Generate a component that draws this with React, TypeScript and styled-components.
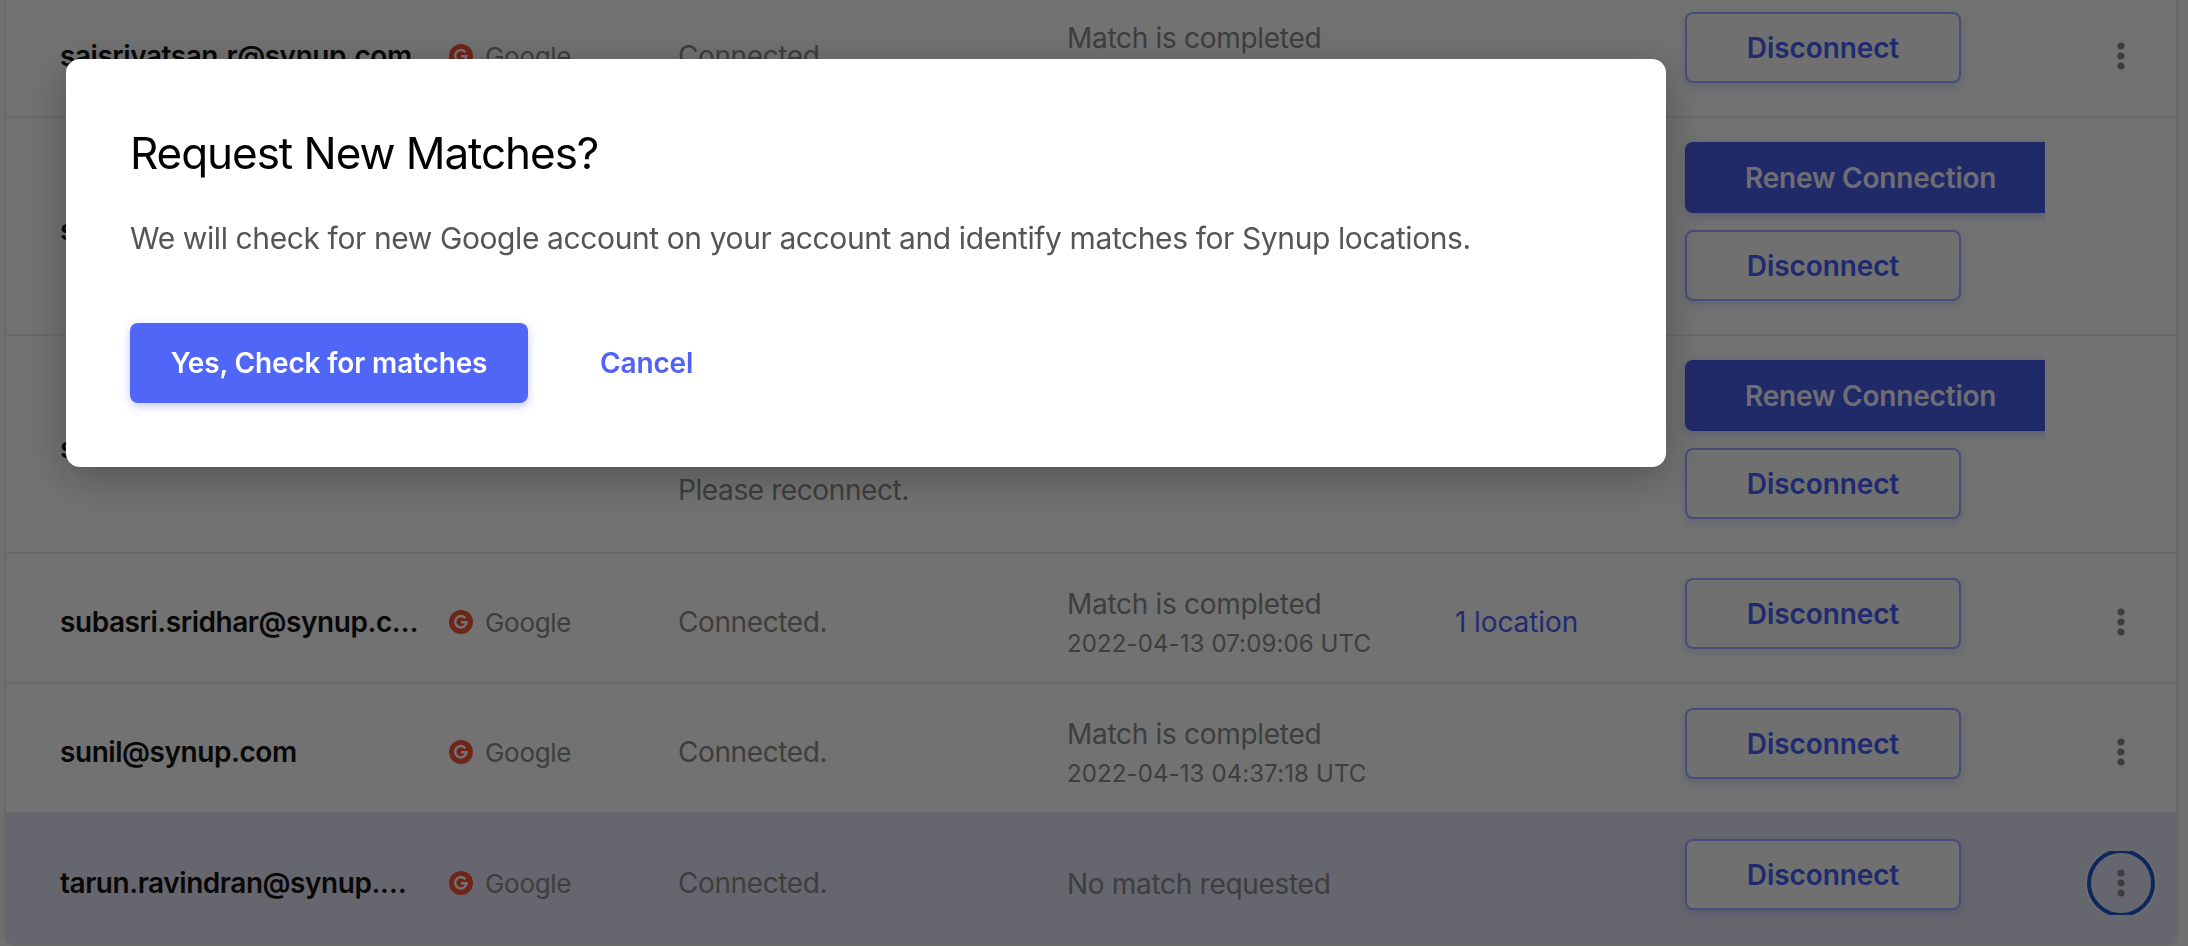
import React from "react";
import styled, { createGlobalStyle } from "styled-components";

const Global = createGlobalStyle`
  html, body { margin: 0; padding: 0; height: 100%; overflow: hidden; background: #e0e0e0; }
  body { font-family: Inter, "Liberation Sans", sans-serif; -webkit-font-smoothing: antialiased; }
  * { box-sizing: border-box; }
`;

const Page = styled.div`
  height: 946px;
  overflow: hidden;
  padding: 0 10px 0 4px;
`;

const Card = styled.section`
  margin-top: -12px;
  border: solid #d2d2d2;
  border-width: 0 2px 2px 2px;
  border-radius: 0 0 10px 10px;
  background: #e4e4e4;
`;

const Row = styled.div<{ $tall?: boolean; $active?: boolean }>`
  display: grid;
  grid-template-columns: 389px 229px 389px 388px 230px 400px 72px;
  align-items: center;
  height: ${(p) => (p.$tall ? 218 : 130)}px;
  padding: 8px 0 0 54px;
  border-bottom: 2px solid ${(p) => (p.$active ? "transparent" : "#d2d2d2")};
  background: ${(p) => (p.$active ? "#ccccde" : "transparent")};
  &:last-child {
    border-bottom: 0;
    border-radius: 0 0 8px 8px;
  }
`;

const Email = styled.div`
  width: 359px;
  font-size: 28px;
  font-weight: 600;
  letter-spacing: -0.45px;
  color: #111;
  white-space: nowrap;
  overflow: hidden;
  text-overflow: ellipsis;
`;

const Provider = styled.div`
  display: flex;
  align-items: center;
  gap: 12px;
  font-size: 26px;
  letter-spacing: -0.3px;
  color: #7c7c7c;
`;

const Status = styled.div<{ $drop?: number }>`
  padding-top: ${(p) => p.$drop ?? 0}px;
  font-size: 28px;
  letter-spacing: -0.4px;
  color: #7c7c7c;
`;

const MatchCell = styled.div`
  display: flex;
  flex-direction: column;
  gap: 8px;
  padding-top: 2px;
`;

const MatchTitle = styled.span`
  font-size: 28px;
  line-height: 34px;
  letter-spacing: -0.3px;
  color: #7c7c7c;
`;

const MatchDate = styled.span`
  font-size: 24px;
  line-height: 30px;
  letter-spacing: 0.12px;
  color: #7c7c7c;
`;

const LocationLink = styled.a`
  font-size: 28px;
  letter-spacing: -0.1px;
  color: #4358e0;
`;

const Actions = styled.div`
  display: flex;
  flex-direction: column;
  gap: 17px;
  padding-bottom: 17px;
`;

const Disconnect = styled.button`
  width: 276px;
  height: 71px;
  border: 2px solid #8c9cf0;
  border-radius: 8px;
  background: #e0e0e0;
  box-shadow: 0 3px 8px rgba(70, 90, 220, 0.22);
  color: #4055de;
  font: 600 28px Inter, sans-serif;
  letter-spacing: -0.1px;
`;

const RenewClip = styled.div`
  width: 360px;
  clip-path: inset(-14px 0 -14px -14px);
`;

const Renew = styled.button`
  width: 420px;
  height: 71px;
  padding: 0 0 0 60px;
  border: 0;
  border-radius: 8px;
  text-align: left;
  background: #4355d2;
  box-shadow: 0 3px 10px rgba(70, 90, 220, 0.3);
  color: #dcdce8;
  font: 600 28px Inter, sans-serif;
  letter-spacing: -0.2px;
`;

const KebabClip = styled.div`
  display: flex;
  align-items: center;
  justify-content: center;
  width: 72px;
  height: 64px;
  overflow: hidden;
`;

const Kebab = styled.button<{ $focused?: boolean }>`
  flex: none;
  display: flex;
  align-items: center;
  justify-content: center;
  width: 68px;
  height: 68px;
  padding: 0;
  border-radius: 50%;
  background: transparent;
  border: 4px solid ${(p) => (p.$focused ? "#1c50b8" : "transparent")};
  box-shadow: ${(p) => (p.$focused ? "0 0 0 2px rgba(255,255,255,.25)" : "none")};
`;

const Overlay = styled.div`
  position: fixed;
  inset: 0;
  padding: 59px 522px 0 66px;
  background: rgba(0, 0, 0, 0.5);
`;

const Modal = styled.div`
  width: 1600px;
  height: 408px;
  padding: 64px 64px 0;
  border-radius: 14px;
  background: #fff;
  box-shadow: 0 10px 40px rgba(0, 0, 0, 0.28);
`;

const Title = styled.h2`
  margin: 0;
  font-size: 44px;
  line-height: 60px;
  font-weight: 400;
  letter-spacing: -1.05px;
  color: #000;
`;

const Body = styled.p`
  margin: 35px 0 0;
  font-size: 30px;
  line-height: 40px;
  letter-spacing: -0.4px;
  color: #555;
`;

const ModalActions = styled.div`
  display: flex;
  align-items: center;
  gap: 72px;
  margin-top: 65px;
`;

const Primary = styled.button`
  width: 398px;
  height: 80px;
  border: 0;
  border-radius: 8px;
  background: #4f66f6;
  box-shadow: 0 3px 10px rgba(79, 102, 246, 0.35);
  color: #fff;
  font: 600 28px Inter, sans-serif;
  letter-spacing: -0.15px;
`;

const Cancel = styled.button`
  padding: 0;
  border: 0;
  background: none;
  color: #4f62f6;
  font: 600 28px Inter, sans-serif;
  letter-spacing: -0.15px;
`;

const GoogleIcon = () => (
  <svg width="24" height="24" viewBox="0 0 24 24" aria-hidden="true">
    <circle cx="12" cy="12" r="12" fill="#dc4a35" />
    <path d="M16.4 8.2A5.7 5.7 0 1 0 17.6 12.2H12" fill="none" stroke="#e8e8e8" strokeWidth="2.4" />
  </svg>
);

const Dots = () => (
  <svg width="8" height="28" viewBox="0 0 8 28" aria-hidden="true">
    <circle cx="4" cy="4" r="3.6" fill="#7c7c7c" />
    <circle cx="4" cy="14" r="3.6" fill="#7c7c7c" />
    <circle cx="4" cy="24" r="3.6" fill="#7c7c7c" />
  </svg>
);

type RowData = {
  email: string;
  status?: string;
  drop?: number;
  title?: string;
  date?: string;
  locations?: string;
  renew?: boolean;
  active?: boolean;
};

const rows: RowData[] = [
  { email: "saisrivatsan.r@synup.com", status: "Connected.", title: "Match is completed", date: "\u00a0" },
  { email: "s", renew: true },
  { email: "s", renew: true, status: "Please reconnect.", drop: 84 },
  { email: "subasri.sridhar@synup.com", status: "Connected.", title: "Match is completed", date: "2022-04-13 07:09:06 UTC", locations: "1 location" },
  { email: "sunil@synup.com", status: "Connected.", title: "Match is completed", date: "2022-04-13 04:37:18 UTC" },
  { email: "tarun.ravindran@synup.com", status: "Connected.", title: "No match requested", active: true },
];

export default function App() {
  return (
    <>
      <Global />
      <Page>
        <Card>
          {rows.map((r, i) => (
            <Row key={i} $tall={r.renew} $active={r.active}>
              <Email>{r.email}</Email>
              <Provider>
                {!r.renew && <GoogleIcon />}
                {!r.renew && "Google"}
              </Provider>
              <Status $drop={r.drop}>{r.status}</Status>
              <MatchCell>
                {r.title && <MatchTitle>{r.title}</MatchTitle>}
                {r.date && <MatchDate>{r.date}</MatchDate>}
              </MatchCell>
              <div>{r.locations && <LocationLink>{r.locations}</LocationLink>}</div>
              <Actions>
                {r.renew && (
                  <RenewClip>
                    <Renew>Renew Connection</Renew>
                  </RenewClip>
                )}
                <Disconnect>Disconnect</Disconnect>
              </Actions>
              {!r.renew && (
                <KebabClip>
                  <Kebab $focused={r.active}>
                    <Dots />
                  </Kebab>
                </KebabClip>
              )}
            </Row>
          ))}
        </Card>
      </Page>
      <Overlay>
        <Modal>
          <Title>Request New Matches?</Title>
          <Body>We will check for new Google account on your account and identify matches for Synup locations.</Body>
          <ModalActions>
            <Primary>Yes, Check for matches</Primary>
            <Cancel>Cancel</Cancel>
          </ModalActions>
        </Modal>
      </Overlay>
    </>
  );
}
